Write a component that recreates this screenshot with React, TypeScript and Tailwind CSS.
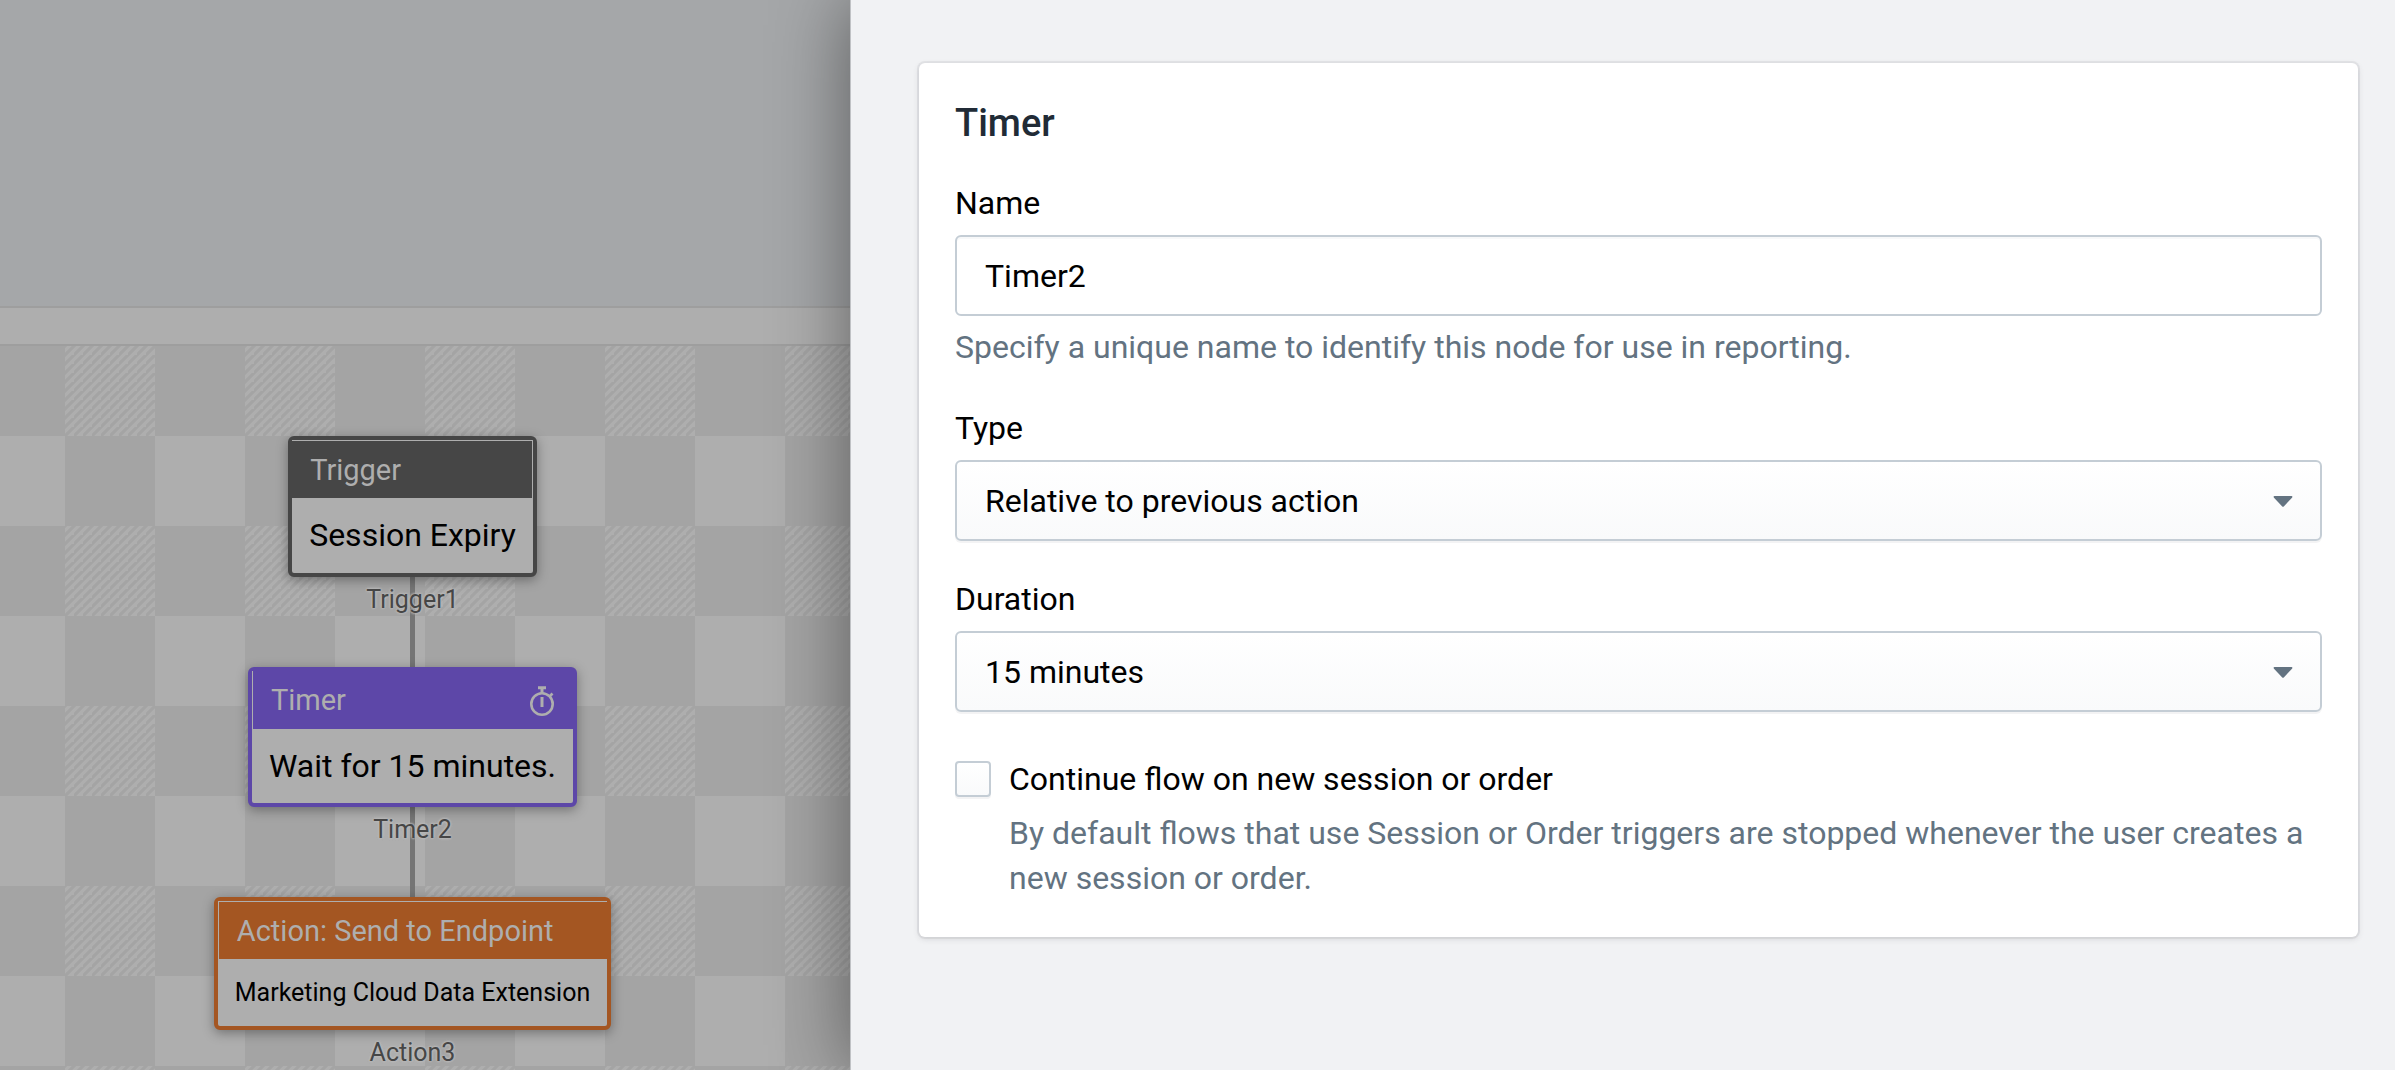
import { useId, useState, type ReactNode } from "react";

const TILE_LIGHT = "#aeaeae";
const TILE_DARK = "#a4a4a4";

function CheckerBackground() {
  const id = useId();
  return (
    <svg className="absolute inset-0 h-full w-full" aria-hidden="true">
      <defs>
        <pattern id={`${id}h`} width="9" height="9" patternUnits="userSpaceOnUse">
          <rect width="9" height="9" fill={TILE_DARK} />
          <path d="M-2 6.500L6.500 -2M-2 15.500L15.500 -2M6 12L12 6" stroke={TILE_LIGHT} strokeWidth="3.200" />
        </pattern>
        <pattern id={`${id}c`} x="65" width="180" height="180" patternUnits="userSpaceOnUse">
          <rect width="180" height="180" fill={TILE_DARK} />
          <rect width="90" height="90" fill={`url(#${id}h)`} />
          <rect x="90" y="90" width="90" height="90" fill={TILE_LIGHT} />
        </pattern>
      </defs>
      <rect width="100%" height="100%" fill={`url(#${id}c)`} />
    </svg>
  );
}

function StopwatchIcon() {
  return (
    <svg width="26" height="30" viewBox="0 0 26 30" fill="none" stroke="#aeaeae" aria-hidden="true">
      <circle cx="13" cy="18" r="10.7" strokeWidth="2.6" />
      <path d="M9 1.800h8M13 2v5" strokeWidth="3" />
      <path d="M20.500 10.500l3-3" strokeWidth="2.6" />
      <path d="M13 11v10" strokeWidth="3" />
    </svg>
  );
}

type NodeProps = {
  title: string;
  name: string;
  frame: string;
  header: string;
  icon?: ReactNode;
  children: ReactNode;
};

function FlowNode({ title, name, frame, header, icon, children }: NodeProps) {
  return (
    <div className="flex flex-col items-center">
      <div className={`rounded-md border-4 bg-[#aeaeae] shadow-[0_3px_12px_rgba(0,0,0,0.35)] ${frame}`}>
        <div
          className={`flex h-[58px] items-center justify-between border-[#aeaeae] px-[18px] pt-0.5 text-[29px] text-[#aeaeae] ${header}`}
        >
          <span>{title}</span>
          {icon}
        </div>
        {children}
      </div>
      <div className="mt-[3px] h-10 text-[25px] leading-10 text-[#464646] [text-shadow:0_0_3px_#bbb,0_0_3px_#bbb,0_0_2px_#bbb]">
        {name}
      </div>
    </div>
  );
}

type SelectFieldProps = { id: string; label: string; options: string[] };

function SelectField({ id, label, options }: SelectFieldProps) {
  return (
    <div className="flex flex-col">
      <label htmlFor={id} className="leading-[45px]">
        {label}
      </label>
      <div className="relative mt-[9px]">
        <select
          id={id}
          className="block h-[81px] w-full appearance-none rounded-md border-2 border-[#c4cdd5] bg-linear-to-b from-white to-[#f9fafb] px-7 shadow-[0_2px_0_rgba(22,29,37,0.05)]"
        >
          {options.map((o) => (
            <option key={o}>{o}</option>
          ))}
        </select>
        <svg
          className="pointer-events-none absolute top-9 right-[29px]"
          width="20"
          height="12"
          viewBox="0 0 20 12"
          fill="#637381"
          aria-hidden="true"
        >
          <path d="M1.500 0H18.500Q20 0.500 19 1.700L11 10.200Q10 11.200 9 10.200L1 1.700Q0 0.500 1.500 0Z" />
        </svg>
      </div>
    </div>
  );
}

export default function App() {
  const [name, setName] = useState("Timer2");
  const [checked, setChecked] = useState(false);

  return (
    <div className="flex min-h-screen font-[Roboto,sans-serif] text-[32px] text-black">
      <main className="flex w-[850px] shrink-0 flex-col bg-[#a5a7a9]">
        <div className="h-[306px]" />
        <div className="h-10 border-y-2 border-[#9e9e9e] bg-[#aeaeae]" />
        <div className="relative flex-1 overflow-hidden">
          <CheckerBackground />
          <div className="absolute top-[135px] left-[410px] h-[430px] w-[5px] bg-[#757575]" />
          <div className="absolute top-[90px] left-0 flex w-[825px] flex-col items-center gap-[47px]">
            <FlowNode title="Trigger" name="Trigger1" frame="border-[#464646]" header="border-t border-r bg-[#464646]">
              <div className="h-[75px] px-[17px] leading-[75px]">Session Expiry</div>
            </FlowNode>
            <FlowNode
              title="Timer"
              name="Timer2"
              frame="border-[#5d47a8]"
              header="border-l bg-[#5d47a8]"
              icon={<StopwatchIcon />}
            >
              <div className="h-[74px] px-[17px] leading-[74px]">Wait for 15 minutes.</div>
            </FlowNode>
            <FlowNode
              title="Action: Send to Endpoint"
              name="Action3"
              frame="border-[#a45622]"
              header="border-t border-l bg-[#a45622]"
            >
              <div className="h-[67px] px-[17px] text-[25px] leading-[67px]">Marketing Cloud Data Extension</div>
            </FlowNode>
          </div>
        </div>
      </main>

      <aside className="relative flex-1 border-l border-[#c0c2c5] bg-[#f1f2f4] pt-[63px] pr-[37px] pl-[68px] shadow-[0_0_72px_rgba(0,0,0,0.45)]">
        <section className="rounded-md bg-white p-9 shadow-[0_0_0_2px_rgba(63,63,68,0.07),0_2px_6px_rgba(63,63,68,0.15)]">
          <h2 className="text-[38px] leading-12 font-medium text-[#212b36]">Timer</h2>
          <div className="mt-[34px] flex flex-col">
            <label htmlFor="name" className="leading-[45px]">
              Name
            </label>
            <input
              id="name"
              value={name}
              onChange={(e) => setName(e.target.value)}
              className="mt-[9px] h-[81px] w-full rounded-md border-2 border-[#c4cdd5] bg-white px-7 shadow-[inset_0_2px_0_rgba(99,115,129,0.05)]"
            />
            <p className="mt-[9px] leading-[45px] text-[#637381]">
              Specify a unique name to identify this node for use in reporting.
            </p>
          </div>
          <div className="mt-9 flex flex-col gap-9">
            <SelectField id="type" label="Type" options={["Relative to previous action"]} />
            <SelectField id="duration" label="Duration" options={["15 minutes"]} />
          </div>
          <div className="mt-[45px] flex gap-[18px]">
            <input
              id="continue"
              type="checkbox"
              checked={checked}
              onChange={(e) => setChecked(e.target.checked)}
              aria-describedby="continue-help"
              className="mt-1 size-9 shrink-0 appearance-none rounded border-2 border-[#c4cdd5] bg-linear-to-b from-white to-[#f9fafb] shadow-[0_2px_0_rgba(22,29,37,0.05)] checked:from-[#637381] checked:to-[#637381]"
            />
            <div>
              <label htmlFor="continue" className="block leading-[45px]">
                Continue flow on new session or order
              </label>
              <p id="continue-help" className="mt-[9px] leading-[45px] text-[#637381]">
                By default flows that use Session or Order triggers are stopped whenever the user creates a new session
                or order.
              </p>
            </div>
          </div>
        </section>
      </aside>
    </div>
  );
}
